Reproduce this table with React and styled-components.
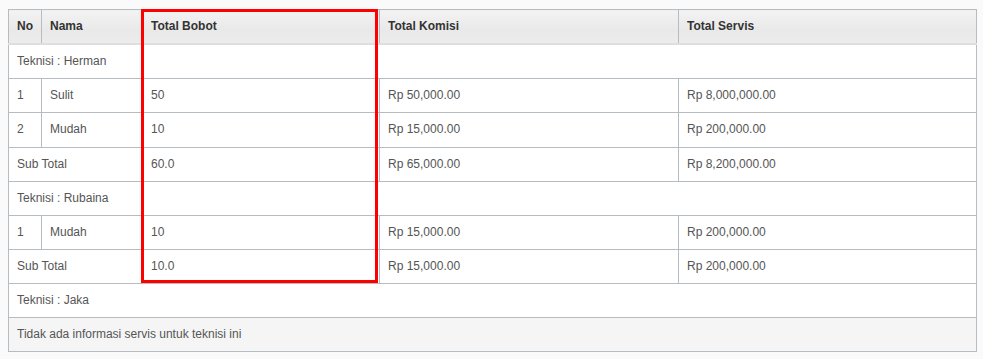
import styled, { createGlobalStyle } from "styled-components";

const Global = createGlobalStyle`
body {
    margin: 0;
    background: #fafafa;
    font-family: "Liberation Sans", Arial, sans-serif;
}
`;

const Page = styled.div`
padding: 9px 0 0 8px;
`;

const Wrap = styled.div`
position: relative;
width: 969px;
`;

const Table = styled.table`
width: 100%;
table-layout: fixed;
border-collapse: collapse;
background: #fff;
font-size: 12px;
color: #555;
border: 1px solid #b5bcc2;
`;

const Th = styled.th`
text-align: left;
font-weight: bold;
color: #333;
padding: 8px;
line-height: 1.428571;
border-left: 1px solid #b5bcc2;
border-bottom: 2px solid #dedede;
background: linear-gradient(#f3f3f3, #e9e9e9 60%, #ececec);
`;

const Td = styled.td`
padding: 8px;
line-height: 1.428571;
border-top: 1px solid #b5bcc2;
border-left: 1px solid #b5bcc2;
background: ${p => (p.$muted ? "#f5f5f5" : "#fff")};
white-space: nowrap;
`;

const Highlight = styled.div`
position: absolute;
left: 133px;
top: 0;
width: 237px;
height: 274px;
box-sizing: border-box;
border: 3px solid #ff0000;
pointer-events: none;
`;

const groups = [
    {
        name: "Herman",
        items: [
            { no: 1, nama: "Sulit", bobot: "50", komisi: "Rp 50,000.00", servis: "Rp 8,000,000.00" },
            { no: 2, nama: "Mudah", bobot: "10", komisi: "Rp 15,000.00", servis: "Rp 200,000.00" },
        ],
        total: { bobot: "60.0", komisi: "Rp 65,000.00", servis: "Rp 8,200,000.00" },
    },
    {
        name: "Rubaina",
        items: [
            { no: 1, nama: "Mudah", bobot: "10", komisi: "Rp 15,000.00", servis: "Rp 200,000.00" },
        ],
        total: { bobot: "10.0", komisi: "Rp 15,000.00", servis: "Rp 200,000.00" },
    },
    { name: "Jaka", items: [] },
];

export default function App() {
    return (
        <Page>
            <Global />
            <Wrap>
                <Table>
                    <colgroup>
                        <col style={{ width: 33 }} />
                        <col style={{ width: 101 }} />
                        <col style={{ width: 237 }} />
                        <col style={{ width: 299 }} />
                        <col />
                    </colgroup>
                    <thead>
                        <tr>
                            <Th>No</Th>
                            <Th>Nama</Th>
                            <Th>Total Bobot</Th>
                            <Th>Total Komisi</Th>
                            <Th>Total Servis</Th>
                        </tr>
                    </thead>
                    <tbody>
                        {groups.map(g => [
                            <tr key={g.name}>
                                <Td colSpan={5}>Teknisi : {g.name}</Td>
                            </tr>,
                            ...g.items.map(it => (
                                <tr key={g.name + it.no}>
                                    <Td>{it.no}</Td>
                                    <Td>{it.nama}</Td>
                                    <Td>{it.bobot}</Td>
                                    <Td>{it.komisi}</Td>
                                    <Td>{it.servis}</Td>
                                </tr>
                            )),
                            g.total ? (
                                <tr key={g.name + "total"}>
                                    <Td colSpan={2}>Sub Total</Td>
                                    <Td>{g.total.bobot}</Td>
                                    <Td>{g.total.komisi}</Td>
                                    <Td>{g.total.servis}</Td>
                                </tr>
                            ) : (
                                <tr key={g.name + "empty"}>
                                    <Td colSpan={5} $muted>Tidak ada informasi servis untuk teknisi ini</Td>
                                </tr>
                            ),
                        ])}
                    </tbody>
                </Table>
                <Highlight />
            </Wrap>
        </Page>
    );
}
